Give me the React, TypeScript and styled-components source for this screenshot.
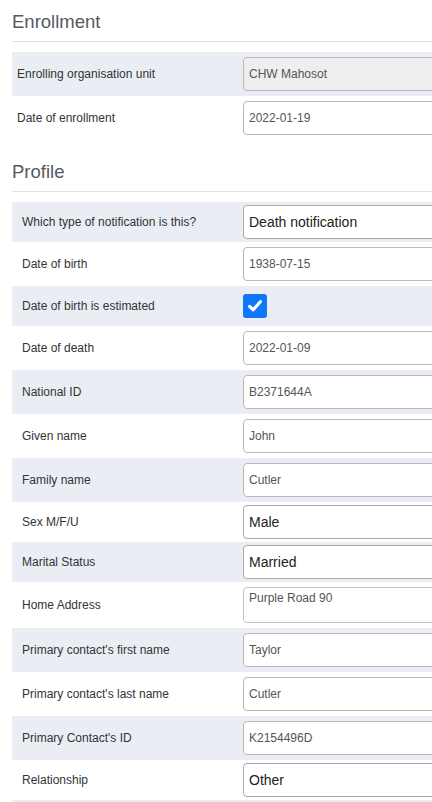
import React from "react";
import styled, { createGlobalStyle } from "styled-components";

const Global = createGlobalStyle`
  html, body {
    margin: 0;
    padding: 0;
    background: #ffffff;
    overflow: hidden;
    font-family: "Liberation Sans", Arial, sans-serif;
  }
`;

const Page = styled.div`
  width: 720px;
  padding: 0 0 0 12px;
  box-sizing: border-box;
`;

const Section = styled.section`
  margin-bottom: 10px;
`;

const Heading = styled.h2`
  margin: 0 0 10px 0;
  padding: 11px 0 9px 0;
  font-size: 18.5px;
  line-height: 21px;
  font-weight: 400;
  color: #555a60;
  border-bottom: 1px solid #e2e2e2;
`;

const Row = styled.div<{ $striped: boolean; $pad: number }>`
  display: grid;
  grid-template-columns: 231px 1fr;
  align-items: center;
  padding: ${(p) => p.$pad}px 0;
  background: ${(p) => (p.$striped ? "#eaeef4" : "#ffffff")};
`;

const Label = styled.div<{ $indent: number }>`
  padding-left: ${(p) => p.$indent}px;
  font-size: 12px;
  color: #333333;
`;

const TextInput = styled.input<{ $large?: boolean }>`
  box-sizing: border-box;
  width: 100%;
  height: 34px;
  margin: 0;
  padding: 0 5px;
  border: 1px solid ${(p) => (p.$large ? "#a9a9a9" : "#b9b9b9")};
  border-radius: 4px;
  font-family: "Liberation Sans", Arial, sans-serif;
  font-size: ${(p) => (p.$large ? "14px" : "12px")};
  color: ${(p) => (p.$large ? "#222222" : "#555555")};
  background: #ffffff;
  outline: none;
  &:disabled {
    background: #eeeeee;
    color: #555555;
  }
`;

const TextArea = styled.textarea`
  box-sizing: border-box;
  display: block;
  width: 100%;
  height: 36px;
  margin: 0;
  padding: 3px 5px;
  border: 1px solid #c4c4c4;
  border-radius: 4px;
  font-family: "Liberation Sans", Arial, sans-serif;
  font-size: 12px;
  line-height: 14px;
  color: #555555;
  resize: none;
  outline: none;
`;

const CheckBox = styled.span`
  display: flex;
  align-items: center;
  justify-content: center;
  width: 24px;
  height: 24px;
  border-radius: 3px;
  background: #0f78f8;
`;

type Field =
  | { kind: "text"; label: string; value: string; disabled?: boolean }
  | { kind: "select"; label: string; value: string }
  | { kind: "check"; label: string }
  | { kind: "area"; label: string; value: string };

const enrollment: Field[] = [
  { kind: "text", label: "Enrolling organisation unit", value: "CHW Mahosot", disabled: true },
  { kind: "text", label: "Date of enrollment", value: "2022-01-19" },
];

const profile: Field[] = [
  { kind: "select", label: "Which type of notification is this?", value: "Death notification" },
  { kind: "text", label: "Date of birth", value: "1938-07-15" },
  { kind: "check", label: "Date of birth is estimated" },
  { kind: "text", label: "Date of death", value: "2022-01-09" },
  { kind: "text", label: "National ID", value: "B2371644A" },
  { kind: "text", label: "Given name", value: "John" },
  { kind: "text", label: "Family name", value: "Cutler" },
  { kind: "select", label: "Sex M/F/U", value: "Male" },
  { kind: "select", label: "Marital Status", value: "Married" },
  { kind: "area", label: "Home Address", value: "Purple Road 90" },
  { kind: "text", label: "Primary contact's first name", value: "Taylor" },
  { kind: "text", label: "Primary contact's last name", value: "Cutler" },
  { kind: "text", label: "Primary Contact's ID", value: "K2154496D" },
  { kind: "select", label: "Relationship", value: "Other" },
];

function Check() {
  return (
    <svg width="18" height="18" viewBox="0 0 18 18" aria-hidden="true">
      <path
        d="M3.6 9.4 L7.2 12.8 L14.4 4.8"
        fill="none"
        stroke="#ffffff"
        strokeWidth="3.2"
        strokeLinecap="round"
        strokeLinejoin="round"
      />
    </svg>
  );
}

function FieldRow({ field, striped, indent }: { field: Field; striped: boolean; indent: number }) {
  let pad = 5;
  let control: React.ReactNode = null;
  if (field.kind === "text") {
    control = <TextInput readOnly disabled={field.disabled} value={field.value} />;
  } else if (field.kind === "select") {
    pad = 3;
    control = <TextInput $large readOnly value={field.value} />;
  } else if (field.kind === "check") {
    pad = 8;
    control = (
      <CheckBox>
        <Check />
      </CheckBox>
    );
  } else {
    control = <TextArea readOnly value={field.value} />;
  }
  return (
    <Row $striped={striped} $pad={pad}>
      <Label $indent={indent}>{field.label}</Label>
      <div>{control}</div>
    </Row>
  );
}

export default function App() {
  return (
    <>
      <Global />
      <Page>
        <Section>
          <Heading>Enrollment</Heading>
          {enrollment.map((f, i) => (
            <FieldRow key={f.label} field={f} striped={i % 2 === 0} indent={5} />
          ))}
        </Section>
        <Section>
          <Heading>Profile</Heading>
          {profile.map((f, i) => (
            <FieldRow key={f.label} field={f} striped={i % 2 === 0} indent={10} />
          ))}
          <Row $striped={true} $pad={22} />
        </Section>
      </Page>
    </>
  );
}
